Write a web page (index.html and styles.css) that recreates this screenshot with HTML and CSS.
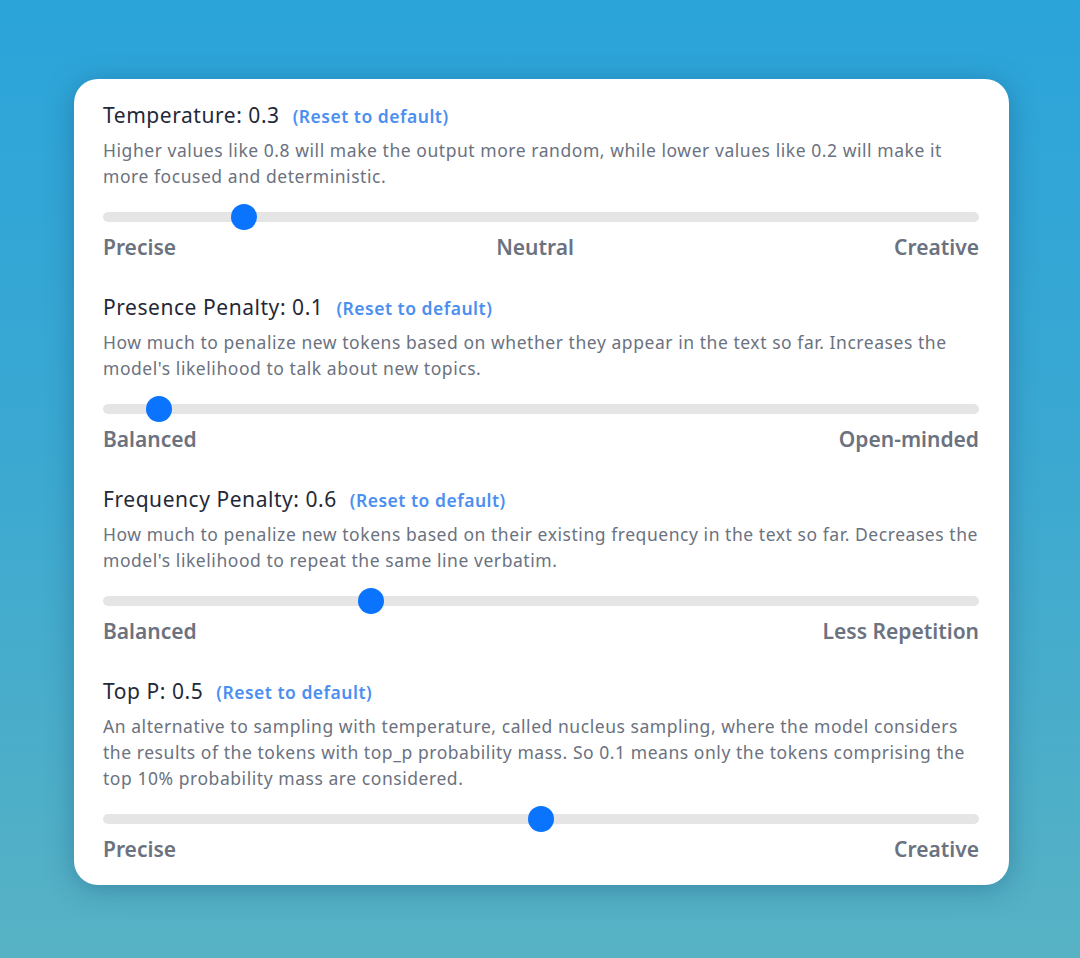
FILE: index.html
```html
<!DOCTYPE html>
<html lang="en">
<head>
    <meta charset="UTF-8">
    <meta name="viewport" content="width=device-width, initial-scale=1.0">
    <title>Model settings</title>
<link rel="stylesheet" href="styles.css">
</head>
<body>
<div class="card">
    <div class="setting">
        <div class="title">Temperature: 0.3 <a class="reset" href="#">(Reset to default)</a></div>
        <p class="desc">Higher values like 0.8 will make the output more random, while lower values like 0.2 will make it more focused and deterministic.</p>
        <input class="range" type="range" min="0" max="2" step="0.1" value="0.3">
        <div class="labels"><span>Precise</span><span>Neutral</span><span>Creative</span></div>
    </div>

    <div class="setting">
        <div class="title">Presence Penalty: 0.1 <a class="reset" href="#">(Reset to default)</a></div>
        <p class="desc">How much to penalize new tokens based on whether they appear in the text so far. Increases the model's likelihood to talk about new topics.</p>
        <input class="range" type="range" min="0" max="2" step="0.1" value="0.1">
        <div class="labels"><span>Balanced</span><span>Open-minded</span></div>
    </div>

    <div class="setting">
        <div class="title">Frequency Penalty: 0.6 <a class="reset" href="#">(Reset to default)</a></div>
        <p class="desc">How much to penalize new tokens based on their existing frequency in the text so far. Decreases the model's likelihood to repeat the same line verbatim.</p>
        <input class="range" type="range" min="0" max="2" step="0.1" value="0.6">
        <div class="labels"><span>Balanced</span><span>Less Repetition</span></div>
    </div>

    <div class="setting">
        <div class="title">Top P: 0.5 <a class="reset" href="#">(Reset to default)</a></div>
        <p class="desc">An alternative to sampling with temperature, called nucleus sampling, where the model considers the results of the tokens with top_p probability mass. So 0.1 means only the tokens comprising the top 10% probability mass are considered.</p>
        <input class="range" type="range" min="0" max="1" step="0.05" value="0.5">
        <div class="labels"><span>Precise</span><span>Creative</span></div>
    </div>
</div>
</body>
</html>
```

FILE: styles.css
```css
html, body {margin: 0; height: 100%;}
body {
    background: linear-gradient(180deg, #2ba4da 0%, #3aa8d2 45%, #57b2c4 100%);
    font-family: "Noto Sans", "Open Sans", sans-serif;
    display: flex;
    align-items: flex-start;
    padding: 79px 0 0 74px;
    box-sizing: border-box;
}
.card {
    width: 935px;
    box-sizing: border-box;
    background: #fff;
    border-radius: 24px;
    padding: 22px 30px 22px 29px;
    box-shadow: 0 4px 28px rgba(20, 70, 110, 0.38);
}
.setting + .setting {margin-top: 32px;}
.title {font-size: 21px; line-height: 28px; letter-spacing: 0.55px; color: #1f2937;}
.reset {font-size: 17.5px; font-weight: 600; letter-spacing: 0.5px; color: #4b8ff0; text-decoration: none; margin-left: 7px;}
.desc {margin: 7px 0 0; font-size: 17.5px; line-height: 26px; letter-spacing: 0.55px; color: #6b7280;}
.range {-webkit-appearance: none; appearance: none; display: block; width: 100%; height: 26px; margin: 15px 0 0; background: transparent; outline: none;}
.range::-webkit-slider-runnable-track {height: 10px; border-radius: 5px; background: #e5e5e5;}
.range::-webkit-slider-thumb {-webkit-appearance: none; width: 26px; height: 26px; border-radius: 50%; background: #0a74ff; border: none; margin-top: -8px;}
.labels {display: flex; justify-content: space-between; margin-top: 3px; font-size: 21px; line-height: 28px; font-weight: 600; color: #6b7280;}
```
